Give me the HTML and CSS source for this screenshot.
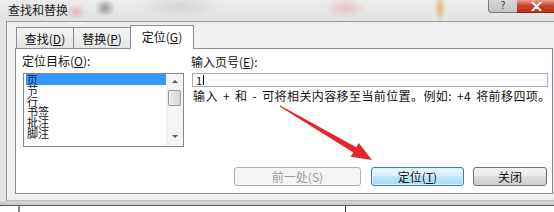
FILE: index.html
```html
<!DOCTYPE html>
<html lang="zh-CN">
<head>
    <meta charset="UTF-8">
    <title>查找和替换</title>
    <link rel="stylesheet" href="styles.css">
</head>
<body>

<div class="screen">
    <!-- Title bar (Aero glass) -->
    <div class="titlebar">
        <span class="title">查找和替换</span>
        <div class="caption-btns">
            <span class="cap-help">?</span>
            <span class="cap-close">
                <svg width="11" height="9" viewBox="0 0 11 9">
                    <path d="M1.5 0.5 L9.5 8.5 M9.5 0.5 L1.5 8.5" stroke="#fff" stroke-width="2.2" stroke-linecap="round"/>
                </svg>
            </span>
        </div>
    </div>

    <div class="client">
        <div class="tabs">
            <div class="tab">查找(<u>D</u>)</div>
            <div class="tab">替换(<u>P</u>)</div>
            <div class="tab active">定位(<u>G</u>)</div>
        </div>

        <div class="panel">
            <div class="fields">
                <div class="col-left">
                    <div class="label">定位目标(<u>O</u>):</div>
                    <div class="listbox">
                        <ul class="items">
                            <li class="selected">页</li>
                            <li>节</li>
                            <li>行</li>
                            <li>书签</li>
                            <li>批注</li>
                            <li>脚注</li>
                        </ul>
                        <div class="vscroll">
                            <span class="arr up"></span>
                            <span class="thumb"></span>
                            <span class="arr down"></span>
                        </div>
                    </div>
                </div>
                <div class="col-right">
                    <div class="label">输入页号(<u>E</u>):</div>
                    <div class="textbox">1<span class="caret"></span></div>
                    <div class="hint">输入 + 和 - 可将相关内容移至当前位置。例如: +4 将前移四项。</div>
                </div>
            </div>

            <div class="buttons">
                <button class="btn disabled">前一处(S)</button>
                <button class="btn default">定位(<u>T</u>)</button>
                <button class="btn close">关闭</button>
            </div>
        </div>
    </div>

    <div class="frame-bottom"></div>
    <div class="below">
        <span class="mark m1"></span>
        <span class="mark m2"></span>
    </div>

    <!-- red annotation arrow drawn over the screenshot -->
    <svg class="arrow" width="554" height="212" viewBox="0 0 554 212">
        <polygon points="280.3,105.6 356.3,147.3 358.8,143.0 372,160 350.7,156.8 353.3,152.5 279.7,106.4" fill="#e3262a"/>
    </svg>
</div>

</body>
</html>
```

FILE: styles.css
```css
body {
    margin: 0;
    font-family: "Noto Sans CJK SC", "Liberation Sans", sans-serif;
    font-size: 12px;
    color: #111;
}
u {
    text-decoration-thickness: 1px;
    text-underline-offset: 1px;
}
.screen {
    position: relative;
    width: 554px;
    height: 212px;
    overflow: hidden;
    background: #e4e4e4;
    display: flex;
    flex-direction: column;
}

/* title bar */
.titlebar {
    height: 21px;
    flex: none;
    display: flex;
    background:
        radial-gradient(ellipse 10px 9px at 105px 8px, rgba(120,120,120,0.7), rgba(120,120,120,0)),
        radial-gradient(ellipse 10px 8px at 76px 12px, rgba(220,140,140,0.5), rgba(220,140,140,0)),
        radial-gradient(ellipse 6px 14px at 440px 8px, rgba(220,170,80,0.8), rgba(220,170,80,0)),
        radial-gradient(ellipse 20px 10px at 345px 8px, rgba(235,160,160,0.55), rgba(235,160,160,0)),
        radial-gradient(ellipse 40px 12px at 180px 6px, rgba(200,200,200,0.6), rgba(200,200,200,0)),
        linear-gradient(#ebebeb, #e2e2e2);
}
.title {
    padding: 2px 0 0 8px;
    line-height: 16px;
    color: #1a1a1a;
}
.caption-btns {
    margin-left: auto;
    display: flex;
    height: 13px;
    margin-right: -2px;
}
.cap-help {
    width: 28px;
    border: 1px solid #7a7a7a;
    border-top: none;
    border-right: none;
    border-bottom-left-radius: 4px;
    background: linear-gradient(#d8d8d8, #c4c4c4);
    color: #444;
    font-family: "DejaVu Sans", sans-serif;
    font-size: 10px;
    line-height: 11px;
    text-align: center;
}
.cap-close {
    width: 39px;
    border-bottom: 1px solid #8a2a1a;
    background: linear-gradient(#e8a090, #c8402c 50%, #c0301c);
    display: flex;
    align-items: center;
    justify-content: center;
}

/* client area */
.client {
    height: 180px;
    flex: none;
    box-sizing: border-box;
    margin-left: 6px;
    border-top: 1px solid #9c9c9c;
    border-left: 1px solid #9c9c9c;
    border-bottom: 1px solid #b8b8b8;
    background: #f0f0f0;
    padding: 5px 0 0 8px;
}
.tabs {
    display: flex;
    align-items: flex-end;
    height: 21px;
    margin-left: 1px;
}
.tab {
    height: 21px;
    width: 58px;
    box-sizing: border-box;
    border: 1px solid #898c95;
    border-bottom: none;
    background: linear-gradient(#f4f4f4, #e6e6e6);
    text-align: center;
    line-height: 19px;
    padding-top: 1px;
}
.tab + .tab {
    margin-left: -1px;
}
.tab.active {
    position: relative;
    z-index: 1;
    width: 64px;
    height: 24px;
    margin-bottom: -1px;
    background: #fff;
    line-height: 20px;
}

.panel {
    width: 538px;
    height: 146px;
    box-sizing: border-box;
    border: 1px solid #898c95;
    background: #fff;
    padding: 5px 5px 7px 7px;
    display: flex;
    flex-direction: column;
}
.fields {
    display: flex;
    gap: 8px;
}
.label {
    line-height: 14px;
    height: 14px;
    margin-bottom: 5px;
    margin-left: -1px;
}
.col-right .label {
    margin-top: 1px;
    margin-bottom: 4px;
}

/* list box */
.listbox {
    width: 161px;
    height: 74px;
    box-sizing: border-box;
    border: 1px solid #828790;
    display: flex;
}
.items {
    list-style: none;
    margin: 0;
    padding: 0 0 0 2px;
    flex: 1;
    font-size: 11px;
}
.items li {
    height: 10.8px;
    line-height: 10.8px;
    padding-left: 1px;
}
.items li.selected {
    background: #3399ff;
    color: #10204a;
}
.vscroll {
    width: 17px;
    background: #f4f4f4;
    display: flex;
    flex-direction: column;
    align-items: center;
}
.arr {
    width: 0;
    height: 0;
    border-left: 3px solid transparent;
    border-right: 3px solid transparent;
}
.arr.up {
    border-bottom: 3px solid #555;
    margin-top: 6px;
}
.arr.down {
    border-top: 3px solid #555;
    margin-top: auto;
    margin-bottom: 8px;
}
.thumb {
    width: 13px;
    height: 16px;
    box-sizing: border-box;
    margin-top: 7px;
    border: 1px solid #9a9a9a;
    border-radius: 2px;
    background: linear-gradient(to right, #f2f2f2, #e2e2e2 50%, #d6d6d6);
}

/* page number */
.col-right {
    width: 356px;
}
.textbox {
    height: 14px;
    box-sizing: border-box;
    border: 1px solid #abadb3;
    line-height: 12px;
    padding-left: 3px;
    font-size: 11px;
    display: flex;
    align-items: center;
}
.caret {
    display: inline-block;
    width: 1px;
    height: 10px;
    background: #000;
    margin-left: 1px;
}
.hint {
    margin-top: 2px;
    line-height: 14px;
    white-space: nowrap;
    margin-left: 1px;
    letter-spacing: 0.4px;
    word-spacing: 2px;
}

/* buttons */
.buttons {
    margin-top: auto;
    display: flex;
    justify-content: flex-end;
}
.btn {
    height: 19px;
    box-sizing: border-box;
    font-family: inherit;
    font-size: 12px;
    line-height: 15px;
    padding: 0;
    border: 1px solid #707070;
    border-radius: 3px;
    background: linear-gradient(#f2f2f2, #ebebeb 50%, #dddddd 50%, #cfcfcf);
    color: #111;
}
.btn.disabled {
    width: 127px;
    border-color: #adb2b5;
    background: #f4f4f4;
    color: #9a9a9a;
}
.btn.default {
    width: 93px;
    margin-left: 10px;
    border-color: #3c7fb1;
    background: linear-gradient(#eaf6fd, #d9f0fc 50%, #bee6fd 50%, #a7d9f5);
    box-shadow: inset 0 0 0 1px #d8f0fb;
}
.btn.close {
    width: 74px;
    margin-left: 9px;
}

/* outer frame and the window below */
.frame-bottom {
    height: 4px;
    flex: none;
    background: linear-gradient(#d6d6d6, #c8c8c8);
    border-bottom: 1px solid #5a5a5a;
}
.below {
    flex: 1;
    background: #fff;
    position: relative;
}
.mark {
    position: absolute;
    top: 0;
    width: 1px;
    background: #333;
}
.m1 {
    left: 345px;
    height: 8px;
}
.m2 {
    left: 18px;
    height: 6px;
    width: 2px;
    background: #888;
}

.arrow {
    position: absolute;
    left: 0;
    top: 0;
    pointer-events: none;
}
```
